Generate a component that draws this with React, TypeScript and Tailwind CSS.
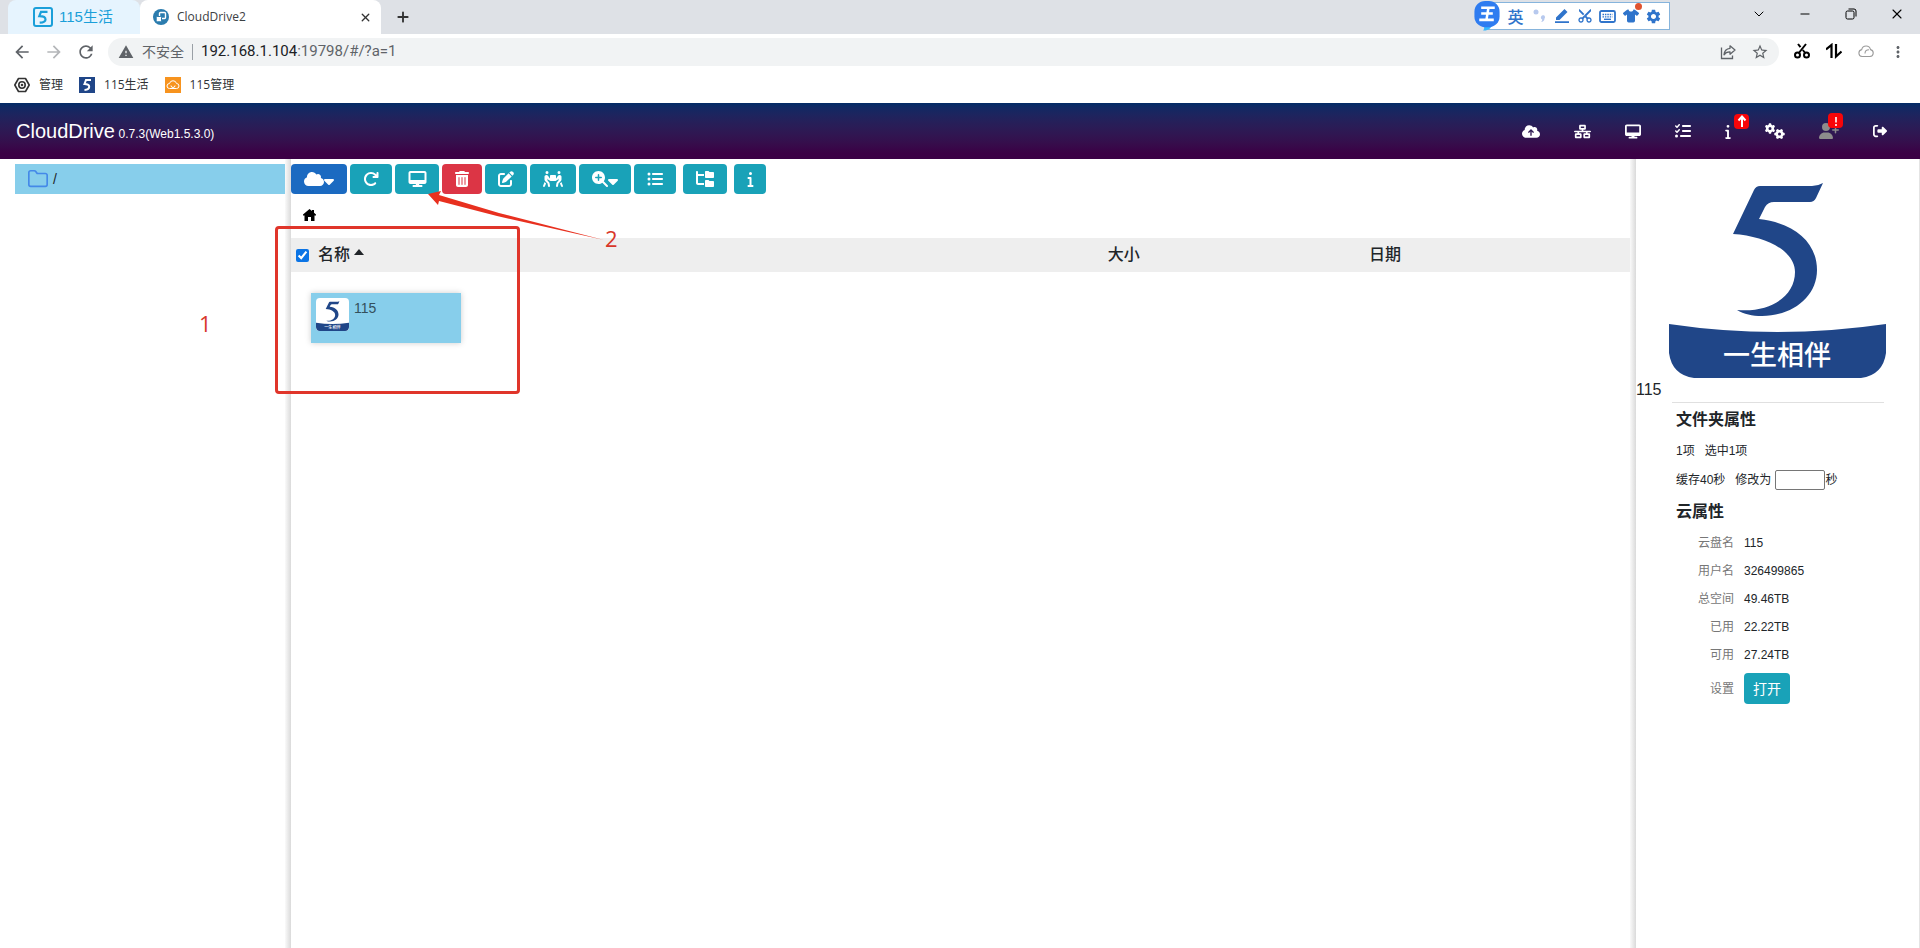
import type { IconType } from "react-icons";
import {
  FaArrowRotateRight,
  FaCaretDown,
  FaCloud,
  FaCloudArrowUp,
  FaDesktop,
  FaFolderTree,
  FaGears,
  FaInfo,
  FaListCheck,
  FaListUl,
  FaMagnifyingGlassPlus,
  FaNetworkWired,
  FaPenToSquare,
  FaPeopleCarryBox,
  FaRightFromBracket,
  FaShirt,
  FaTrashCan,
  FaUserPlus,
} from "react-icons/fa6";
import {
  MdArrowBack,
  MdArrowForward,
  MdContentCut,
  MdMoreVert,
  MdRefresh,
  MdSettings,
  MdStarBorder,
  MdWarning,
} from "react-icons/md";
import { ChevronDown, Folder, Minus, Plus, X } from "lucide-react";

type HeaderItem = {
  label: string;
  icon: IconType;
  size: string;
  badge?: string;
};

const headerItems: HeaderItem[] = [
  { label: "上传", icon: FaCloudArrowUp, size: "h-[15px] w-[18px]" },
  { label: "网络", icon: FaNetworkWired, size: "h-[15px] w-[17px]" },
  { label: "挂载", icon: FaDesktop, size: "h-[15px] w-4" },
  { label: "任务", icon: FaListCheck, size: "h-4 w-4" },
  { label: "关于", icon: FaInfo, size: "h-[15px] w-[6px]", badge: "up" },
  { label: "设置", icon: FaGears, size: "h-4 w-5" },
  {
    label: "用户",
    icon: FaUserPlus,
    size: "h-4 w-5 text-[#8c8c8c]",
    badge: "alert",
  },
  { label: "退出", icon: FaRightFromBracket, size: "h-[14px] w-[14px]" },
];

type Tool = {
  label: string;
  icon: IconType;
  box: string;
  size: string;
  caret?: boolean;
};

const tools: Tool[] = [
  { label: "添加云盘", icon: FaCloud, box: "w-14 bg-[#1b6ac1]", size: "h-4 w-5", caret: true },
  { label: "刷新", icon: FaArrowRotateRight, box: "w-[42px] bg-[#19a2b8]", size: "h-4 w-4" },
  { label: "挂载", icon: FaDesktop, box: "w-11 bg-[#19a2b8]", size: "h-4 w-[19px]" },
  { label: "删除", icon: FaTrashCan, box: "w-10 bg-[#dc3545]", size: "h-4 w-[14px]" },
  { label: "重命名", icon: FaPenToSquare, box: "w-[42px] bg-[#19a2b8]", size: "h-4 w-4" },
  { label: "移动", icon: FaPeopleCarryBox, box: "w-[46px] bg-[#19a2b8]", size: "h-4 w-5" },
  { label: "缩放", icon: FaMagnifyingGlassPlus, box: "w-[52px] bg-[#19a2b8]", size: "h-4 w-4", caret: true },
  { label: "列表", icon: FaListUl, box: "mr-1 w-[42px] bg-[#19a2b8]", size: "h-4 w-4" },
  { label: "目录树", icon: FaFolderTree, box: "mr-1 w-11 bg-[#19a2b8]", size: "h-4 w-5" },
  { label: "属性", icon: FaInfo, box: "w-8 bg-[#19a2b8]", size: "h-4 w-[7px]" },
];

const cloudProperties = [
  { name: "云盘名", value: "115" },
  { name: "用户名", value: "326499865" },
  { name: "总空间", value: "49.46TB" },
  { name: "已用", value: "22.22TB" },
  { name: "可用", value: "27.24TB" },
];

export default function App() {
  return (
    <div className="relative flex min-h-screen flex-col overflow-hidden bg-white font-['Liberation_Sans','Noto_Sans_CJK_SC',sans-serif] text-[#212529]">
      <BrowserChrome />
      <AppHeader />
      <div className="flex grow">
        <Sidebar />
        <Splitter />
        <FileBrowser />
        <Splitter />
        <DetailPanel />
      </div>
      <Annotations />
    </div>
  );
}

function BrowserChrome() {
  return (
    <div className="font-['Open_Sans','Noto_Sans_CJK_SC',sans-serif]">
      <div className="flex h-[34px] bg-[#dee1e6] pl-2">
        <button className="flex w-[132px] items-center gap-[6px] rounded-t-lg bg-[#e6f4fe] pl-[25px] font-['Liberation_Sans','Noto_Sans_CJK_SC',sans-serif] text-[15px] text-[#1a9fd9]">
          <svg viewBox="0 0 20 20" className="size-5" fill="none" stroke="currentColor">
            <rect x="1" y="1" width="18" height="18" rx="2" strokeWidth="2" />
            <path d="M14.500 4.800H8L6.300 9.200c4.500 0 6.200 1.400 6.200 3.200s-1.600 3-5.800 3.200" strokeWidth="2.200" />
          </svg>
          115生活
        </button>
        <div className="flex w-[241px] items-center rounded-t-lg bg-white pr-2 pl-[13px]">
          <svg viewBox="0 0 16 16" className="size-4">
            <circle cx="8" cy="8" r="8" fill="#2b7cae" />
            <rect x="6.500" y="3.500" width="6" height="6" rx="1" fill="none" stroke="#fff" strokeWidth="1.400" />
            <rect x="3.200" y="7.500" width="5.300" height="5.300" rx="1" fill="#fff" stroke="#2b7cae" strokeWidth="1" />
          </svg>
          <span className="ml-2 grow text-xs text-[#3c4043]">CloudDrive2</span>
          <button aria-label="关闭标签页" className="flex size-4 items-center justify-center">
            <X className="size-[13px] text-[#333]" strokeWidth={2.5} />
          </button>
        </div>
        <button aria-label="新标签页" className="ml-3 flex w-5 items-center justify-center">
          <Plus className="size-4 text-[#333]" strokeWidth={2.8} />
        </button>
        <div className="grow" />
        <InputMethodBar />
        <div className="ml-[66px] flex h-7 text-black">
          <button aria-label="搜索标签页" className="flex w-[46px] items-center justify-center">
            <ChevronDown className="size-4" strokeWidth={1.5} />
          </button>
          <button aria-label="最小化" className="flex w-[46px] items-center justify-center">
            <Minus className="size-[14px]" strokeWidth={1.7} />
          </button>
          <button aria-label="还原" className="flex w-[46px] items-center justify-center">
            <svg viewBox="0 0 10 10" className="size-[10px] overflow-visible" fill="none" stroke="currentColor">
              <rect x="0" y="2" width="8" height="8" rx="1.500" />
              <path d="M2.500 0H8a2 2 0 0 1 2 2v5.500" />
            </svg>
          </button>
          <button aria-label="关闭" className="flex w-[46px] items-center justify-center">
            <X className="size-4" strokeWidth={1.6} />
          </button>
        </div>
      </div>

      <div className="flex h-9 items-center pr-[6px] pl-3 text-[#5f6368]">
        <button aria-label="后退" className="w-8">
          <MdArrowBack className="size-5" />
        </button>
        <button aria-label="前进" className="w-8 text-[#b4b6b9]">
          <MdArrowForward className="size-5" />
        </button>
        <button aria-label="重新加载" className="w-8">
          <MdRefresh className="size-5" />
        </button>
        <div className="flex h-7 grow items-center rounded-full bg-[#f1f3f4] pr-[3px] pl-[10px] text-sm">
          <MdWarning className="size-4" />
          <span className="ml-2">不安全</span>
          <span className="mx-2 h-4 w-px bg-[#9aa0a6]" />
          <span className="grow font-[Roboto,sans-serif] text-[15px]">
            <span className="text-[#202124]">192.168.1.104</span>:19798/#/?a=1
          </span>
          <button aria-label="分享" className="flex w-8 justify-center">
            <svg viewBox="0 0 16 16" className="size-4" fill="none" stroke="currentColor" strokeWidth="1.300">
              <path d="M1.500 3.500v11h11v-3" />
              <path d="M10 1.800 15 6l-5 4.200V7.800C7 7.700 5.300 8.600 4 10.800 4.300 7 6.500 4.600 10 4.300z" strokeLinejoin="round" />
            </svg>
          </button>
          <button aria-label="收藏" className="flex w-8 justify-center">
            <MdStarBorder className="size-[18px]" />
          </button>
        </div>
        <div className="ml-[7px] flex text-black">
          <button aria-label="截图" className="flex w-8 justify-center">
            <svg viewBox="0 0 16 16" className="size-4" fill="none" stroke="currentColor" strokeWidth="2">
              <circle cx="3.500" cy="12" r="2.500" />
              <circle cx="12.500" cy="12" r="2.500" />
              <path d="M4.800 10 12 1M11.200 10 8.800 7M6.500 4.200 4 1" />
            </svg>
          </button>
          <button aria-label="传输" className="flex w-8 justify-center">
            <svg viewBox="0 0 16 16" className="size-4" fill="none" stroke="currentColor" strokeWidth="2.200">
              <path d="M0 6.500 5.500 2v13M10 1v12.500l5.500-5" />
            </svg>
          </button>
          <button aria-label="云同步" className="flex w-8 justify-center text-[#9b9b9b]">
            <svg viewBox="0 0 16 16" className="size-4" fill="none" stroke="currentColor" strokeWidth="1.100">
              <path d="M4 13.500a3.500 3.500 0 0 1-.3-6.900 4.500 4.500 0 0 1 8.800 0 3.500 3.500 0 0 1-.5 6.900z" />
              <path d="M7 10.500c0-2.500 1.500-3.800 4-3.800" />
            </svg>
          </button>
          <button aria-label="菜单" className="flex w-8 justify-center text-[#5f6368]">
            <MdMoreVert className="size-[18px]" />
          </button>
        </div>
      </div>

      <div className="flex h-[33px] items-center gap-4 pb-1 pl-[14px] text-xs text-[#303336]">
        <a href="#manage" className="flex items-center gap-[9px]">
          <svg viewBox="0 0 16 16" className="size-4" fill="none" stroke="#333" strokeWidth="1.600">
            <path d="M4.500 1.500h7L15.200 8l-3.700 6.500h-7L.8 8z" strokeLinejoin="round" />
            <circle cx="8" cy="8" r="3.200" />
            <circle cx="8" cy="8" r="0.500" />
          </svg>
          管理
        </a>
        <a href="#life" className="flex items-center gap-[9px]">
          <svg viewBox="0 0 16 16" className="size-4">
            <rect width="16" height="16" fill="#204688" />
            <path d="M12 3H7L5.500 7c3.500 0 4.700 1 4.700 2.700s-1.500 3-4.700 3.200" fill="none" stroke="#fff" strokeWidth="2" />
          </svg>
          115生活
        </a>
        <a href="#admin" className="flex items-center gap-[9px]">
          <svg viewBox="0 0 16 16" className="size-4">
            <rect width="16" height="16" fill="#f7931e" />
            <path d="M4.500 11.500a2.500 2.500 0 0 1 0-5 3.600 3.600 0 0 1 7 0 2.500 2.500 0 0 1 0 5zM6 8.500a2 2 0 0 0 4 0" fill="none" stroke="#fff" />
          </svg>
          115管理
        </a>
      </div>
    </div>
  );
}

function InputMethodBar() {
  return (
    <div className="flex h-[31px] items-start pt-px">
      <svg viewBox="0 0 28 31" className="z-10 -mr-4 h-[30px] w-7">
        <path d="M10 26c2 1 1 3 0 4.500 4 0 7-1 9-5z" fill="#35b8ff" />
        <rect x="1" y="0" width="26" height="27" rx="11" fill="#2f7cf0" />
        <path d="M8 7h14M8 13h12M6 19.500h15M15.500 7l-2 12" stroke="#fff" strokeWidth="2.600" fill="none" />
      </svg>
      <div className="mt-px flex h-7 items-center border border-[#86b4dc] bg-white pr-1 pl-[18px] text-[#2f74cb]">
        <button className="w-[23px] font-['Noto_Sans_CJK_SC',sans-serif] text-base font-medium">英</button>
        <button aria-label="标点" className="flex w-[23px] justify-center text-[#b7c9ee]">
          <svg viewBox="0 0 12 14" className="h-[14px] w-3" fill="currentColor">
            <circle cx="3" cy="3" r="2.500" />
            <path d="M8 8a2 2 0 1 1 3.500 1.500c0 2-1.500 3.500-3.500 3.500 1-.8 1.300-1.500 1.200-2.500A2 2 0 0 1 8 8z" />
          </svg>
        </button>
        <button aria-label="手写" className="flex w-[23px] justify-center">
          <svg viewBox="0 0 14 14" className="size-[14px]" fill="currentColor">
            <path d="M1 8.500 9.500 0 12.500 3 4.500 11H1zM0 12.300h14V14H0z" />
          </svg>
        </button>
        <button aria-label="剪切" className="flex w-[23px] justify-center">
          <MdContentCut className="size-4 -rotate-90" />
        </button>
        <button aria-label="键盘" className="flex w-[23px] justify-center">
          <svg viewBox="0 0 17 13" className="h-[13px] w-[17px]" fill="none" stroke="currentColor">
            <rect x="1" y="1" width="15" height="11" rx="1.500" strokeWidth="1.800" />
            <path d="M3.500 4.500h10M3.500 6.800h10" strokeWidth="1.300" strokeDasharray="1.500 0.900" />
            <path d="M5 9.300h7" strokeWidth="1.400" />
          </svg>
        </button>
        <button aria-label="皮肤" className="relative flex w-[23px] justify-center">
          <FaShirt className="h-[14px] w-4" />
          <span className="absolute -top-[6px] right-0 size-[7px] rounded-full bg-[#e0532f]" />
        </button>
        <button aria-label="设置" className="flex w-[23px] justify-center">
          <MdSettings className="size-[17px]" />
        </button>
      </div>
    </div>
  );
}

function AppHeader() {
  return (
    <header className="flex h-14 items-center bg-linear-to-b from-[#022b66] to-[#3b0045] to-90% pr-[33px] pl-4 text-white">
      <h1 className="grow text-xl">
        CloudDrive <small className="-ml-[2px] text-xs">0.7.3(Web1.5.3.0)</small>
      </h1>
      <nav className="flex items-center gap-[34px]">
        {headerItems.map(({ label, icon: Icon, size, badge }) => (
          <button aria-label={label} className="relative" key={label}>
            <Icon className={size} />
            {badge && (
              <span className="absolute -top-[10px] left-[9px] flex size-[15px] items-center justify-center rounded bg-[#f80509]">
                <svg viewBox="0 0 10 12" className="h-3 w-[10px]" stroke="#fff" strokeWidth="2" fill="none">
                  {badge === "up" ? (
                    <path d="M5 12V2M1.500 5.500 5 1.500l3.500 4" />
                  ) : (
                    <path d="M5 2v5.500M5 9v2" strokeWidth="1.600" />
                  )}
                </svg>
              </span>
            )}
          </button>
        ))}
      </nav>
    </header>
  );
}

function Splitter() {
  return <div className="w-[6px] shrink-0 bg-linear-to-r from-[#fafafa] to-[#dadada]" />;
}

function Sidebar() {
  return (
    <aside className="w-[285px] shrink-0 pt-[5px] pl-[15px]">
      <a href="#/" className="flex h-[30px] items-center gap-1 bg-[#87ceeb] pl-3 text-sm">
        <Folder className="size-[22px] text-[#4489e8]" strokeWidth={1.8} />
        /
      </a>
    </aside>
  );
}

function FileBrowser() {
  return (
    <main className="min-w-0 grow pt-[5px]">
      <div className="flex gap-[3px]">
        {tools.map(({ label, icon: Icon, box, size, caret }) => (
          <button
            aria-label={label}
            className={`flex h-[30px] items-center justify-center rounded text-white ${box}`}
            key={label}
          >
            <Icon className={size} />
            {caret && <FaCaretDown className="mt-1 h-4 w-[10px]" />}
          </button>
        ))}
      </div>
      <a href="#/" aria-label="主页" className="flex h-11 items-center pb-[2px] pl-3">
        <svg viewBox="0 0 13 12" className="h-3 w-[13px]" fill="#000">
          <path d="M6.500 0 9 2V1h2v2.700L13 5.500v1h-1.500V12H8V8H5v4H1.500V6.500H0v-1z" />
        </svg>
      </a>
      <table className="w-full table-fixed text-left">
        <thead>
          <tr className="h-[34px] bg-[#eee] text-base">
            <th className="w-[61%] pl-[5px] font-medium">
              <div className="flex items-center">
                <input
                  type="checkbox"
                  aria-label="全选"
                  defaultChecked
                  className="mr-[9px] size-[13px] accent-[#0b74e5]"
                />
                名称
                <svg viewBox="0 0 10 6" className="mb-[6px] ml-1 h-[6px] w-[10px]" fill="currentColor">
                  <path d="M0 6 5 0l5 6z" />
                </svg>
              </div>
            </th>
            <th className="font-medium">大小</th>
            <th className="font-medium">日期</th>
          </tr>
        </thead>
        <tbody>
          <tr>
            <td colSpan={3} className="pt-[21px] pl-5">
              <button className="flex h-[50px] w-[150px] items-start gap-[5px] bg-[#87ceeb] p-[5px] text-sm shadow-[0_0_6px_#ccc]">
                <CloudLogo className="size-[33px]" />
                <span className="text-[#34505c]">115</span>
              </button>
            </td>
          </tr>
        </tbody>
      </table>
    </main>
  );
}

function CloudLogo({ className }: { className: string }) {
  return (
    <svg viewBox="0 -19 217 217" className={className}>
      <rect y="-19" width="217" height="217" rx="25" fill="#fff" />
      <g fill="#204688">
        <path d="M91 6h52q6 0 11-3l-7 15q-2 4-6 4h-36q-6 0-9 5l-6 12C125 43 148 62 148 90c0 27-25 46-55 46-10 0-18-2-25-6 34 3 58-14 58-38 0-21-29-36-62-38L85 10q2-4 6-4z" />
        <path d="M0 144q108 16 217 0v29q-3 22-25 25H25Q3 195 0 173z" />
      </g>
      <text
        x="108"
        y="185"
        textAnchor="middle"
        fill="#fff"
        fontSize="27"
        fontWeight="500"
        fontFamily="'Noto Sans CJK SC', sans-serif"
      >
        一生相伴
      </text>
    </svg>
  );
}

function DetailPanel() {
  return (
    <aside className="w-[284px] shrink-0 border-r border-[#e4e4e4] pt-[2px] text-xs">
      <div className="flex items-end">
        <span className="w-[33px] text-base leading-6">115</span>
        <CloudLogo className="mb-6 size-[217px]" />
      </div>
      <section className="mr-[35px] ml-9 border-t border-[#e0e0e0] pt-[5px] pl-1">
        <h2 className="text-base leading-6 font-bold">文件夹属性</h2>
        <p className="mt-[7px] flex h-6 items-center gap-[10px]">
          <span>1项</span>
          <span>选中1项</span>
        </p>
        <p className="mt-[5px] flex h-6 items-center">
          <span className="mr-[10px]">缓存40秒</span>
          <label htmlFor="cache-seconds">修改为</label>
          <input
            id="cache-seconds"
            type="text"
            className="ml-1 h-5 w-[50px] rounded-xs border border-[#767676]"
          />
          秒
        </p>
        <h2 className="mt-2 text-base leading-6 font-bold">云属性</h2>
        <dl className="mt-[5px] grid grid-cols-[58px_1fr] gap-x-[10px]">
          {cloudProperties.map(({ name, value }) => (
            <div className="contents" key={name}>
              <dt className="text-right leading-7 text-[#777]">{name}</dt>
              <dd className="leading-7">{value}</dd>
            </div>
          ))}
          <dt className="mt-1 text-right leading-8 text-[#777]">设置</dt>
          <dd className="mt-1">
            <button className="h-[31px] w-[46px] rounded bg-[#19a2b8] text-sm text-white">打开</button>
          </dd>
        </dl>
      </section>
    </aside>
  );
}

// Numbered steps drawn over the page.
function Annotations() {
  return (
    <div className="pointer-events-none absolute inset-0 font-['Open_Sans',sans-serif] text-[22px] leading-6 text-[#d8372a]">
      <div className="absolute top-[226px] left-[275px] h-[168px] w-[245px] rounded-sm border-3 border-[#e0352a]" />
      <span className="absolute top-[311px] left-[199px]">1</span>
      <svg viewBox="0 0 180 50" className="absolute top-[191px] left-[427px] h-[50px] w-[180px]" fill="#e8301f">
        <path d="M1 3 14 0l-2 4 60 18 105 27L70 25 12 10l-1 4z" />
      </svg>
      <span className="absolute top-[226px] left-[605px]">2</span>
    </div>
  );
}
